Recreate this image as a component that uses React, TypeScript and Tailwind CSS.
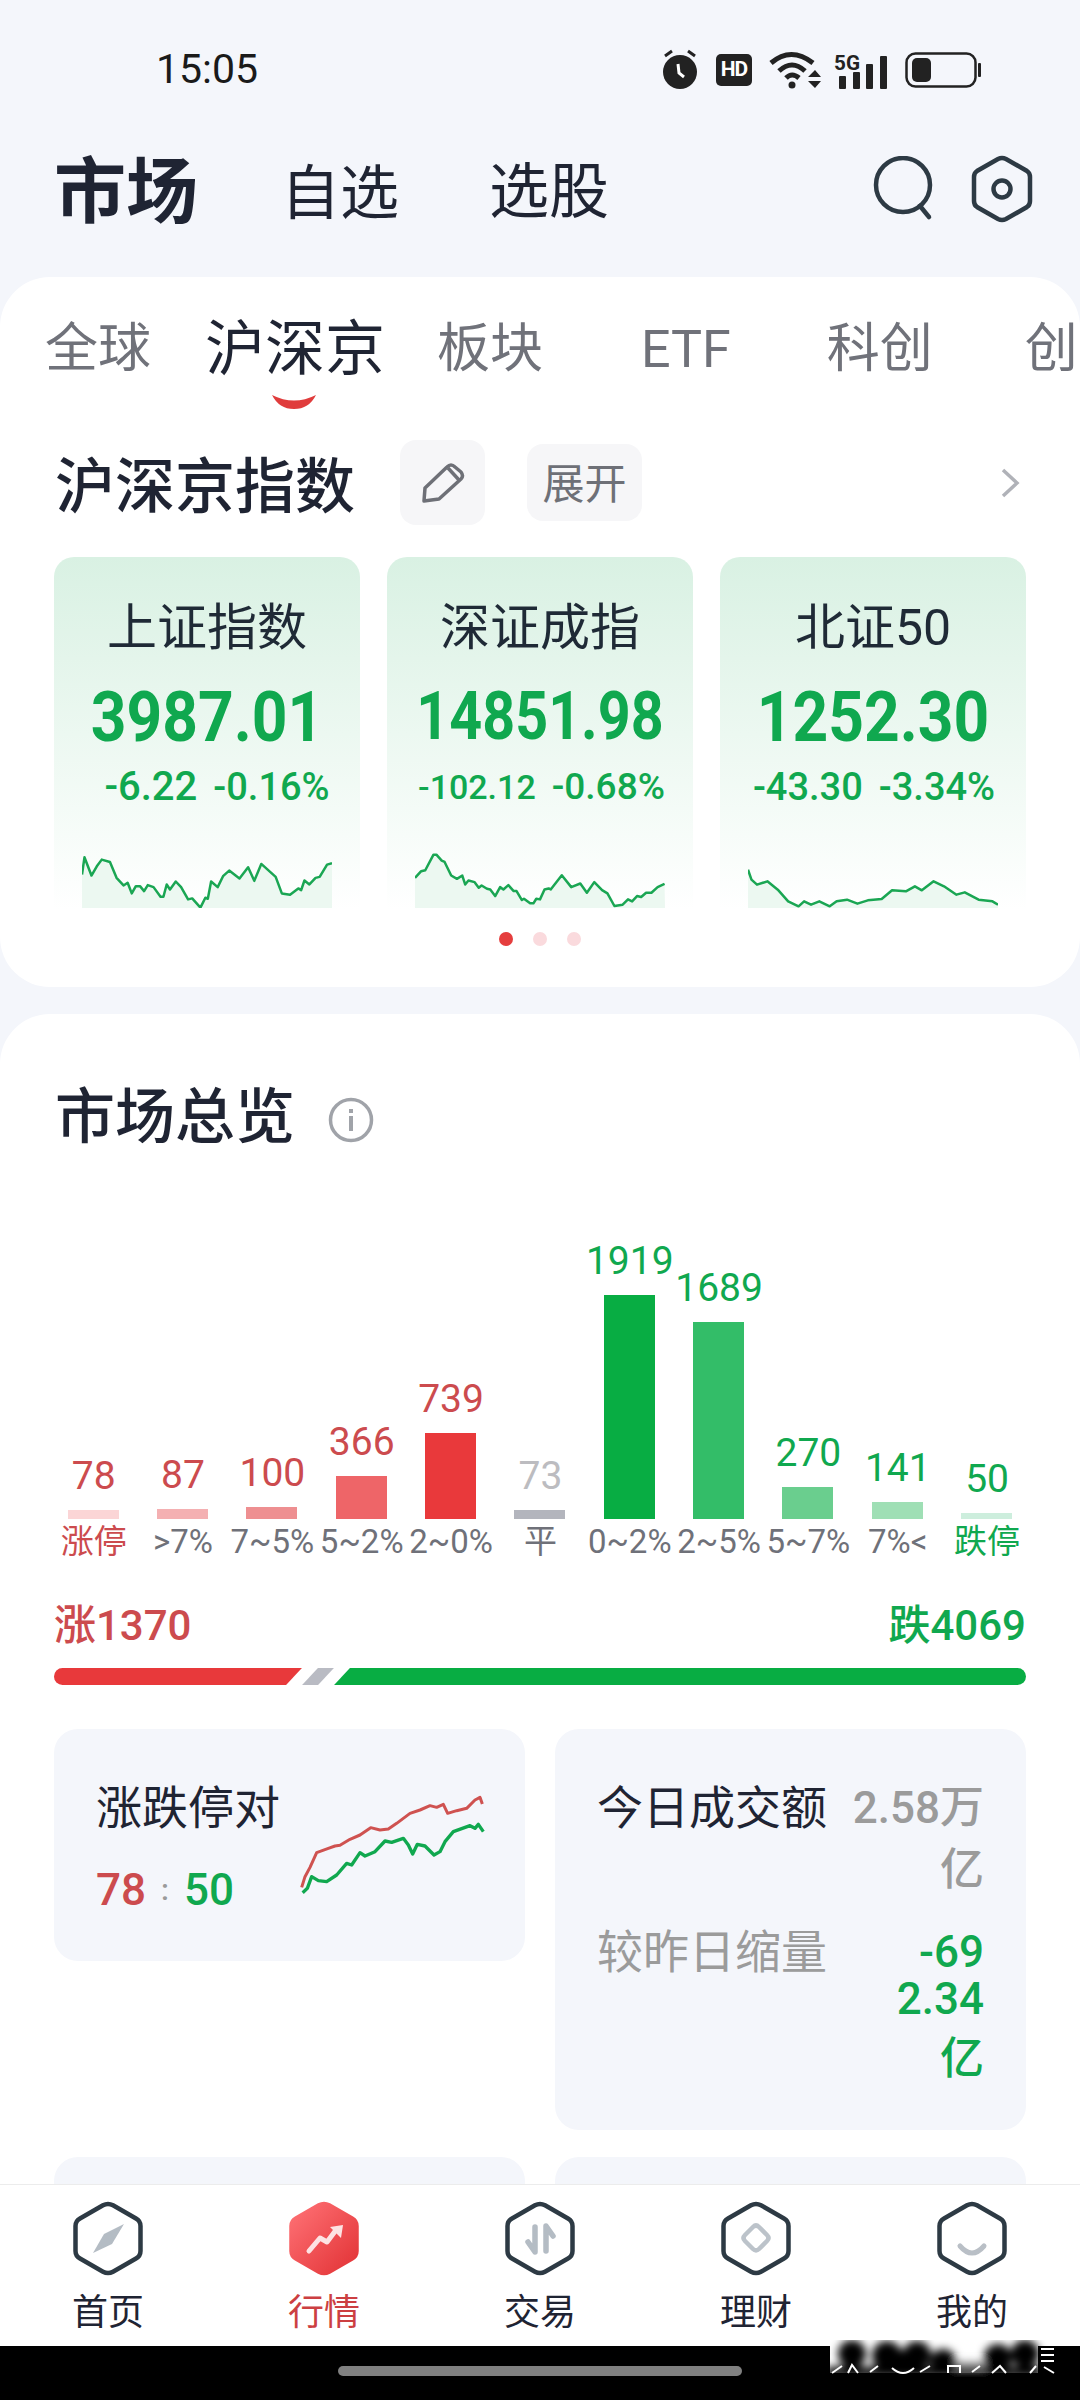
import * as React from 'react';

const INK = '#1f2433';

const hexPath =
  'M30 5.3 Q35 2.5 40 5.3 L63 18.5 Q67.5 21 67.5 26 L67.5 51 Q67.5 56 63 58.5 L40 71.7 Q35 74.5 30 71.7 L7 58.5 Q2.5 56 2.5 51 L2.5 26 Q2.5 21 7 18.5 Z';

const line1 =
  '104,165 110,113 127,168 140,140 152,120 172,127 188,175 205,198 215,190 225,222 235,200 245,200 255,215 264,197 278,203 295,232 302,232 310,195 318,210 332,186 345,203 362,240 372,237 392,265 404,235 410,238 418,186 434,203 447,170 462,153 487,177 508,143 523,184 540,133 575,172 590,222 610,226 630,207 637,212 645,183 657,195 672,175 682,172 700,135 712,131';
const line2 =
  '920,175 935,155 945,152 965,105 972,105 985,123 992,127 1008,168 1022,178 1035,168 1042,195 1050,183 1065,188 1075,205 1082,198 1095,208 1103,210 1115,230 1127,203 1135,210 1147,197 1160,215 1167,215 1180,242 1185,238 1200,252 1208,252 1215,238 1224,240 1235,210 1245,207 1250,210 1277,167 1300,203 1322,192 1338,220 1356,188 1375,212 1388,222 1405,260 1425,256 1438,240 1448,246 1460,230 1470,233 1482,220 1495,220 1510,203 1527,193';
const line3 =
  '1087,990 1092,1020 1100,1035 1115,1025 1130,1050 1145,1085 1160,1100 1168,1085 1178,1095 1190,1085 1205,1100 1215,1085 1230,1080 1245,1092 1260,1082 1280,1078 1295,1052 1315,1055 1328,1040 1338,1052 1355,1025 1370,1040 1388,1065 1400,1058 1420,1080 1440,1085 1448,1095';

const indexCards = [
  {
    name: '上证指数',
    value: '3987.01',
    valueClass: 'text-[70px] scale-x-[0.89]',
    change: '-6.22',
    pct: '-0.16%',
    changeClass: 'pl-[20px] gap-[16px] text-[40px]',
    pctClass: 'text-[38px]',
    line: line1,
    box: { x: 104, y: 100, w: 608, h: 166 },
  },
  {
    name: '深证成指',
    value: '14851.98',
    valueClass: 'text-[66px] scale-x-[0.87]',
    change: '-102.12',
    pct: '-0.68%',
    changeClass: 'pl-[3px] gap-[16px] text-[34px]',
    pctClass: 'text-[37px]',
    line: line2,
    box: { x: 920, y: 100, w: 608, h: 166 },
  },
  {
    name: '北证50',
    value: '1252.30',
    valueClass: 'text-[70px] scale-x-[0.89]',
    change: '-43.30',
    pct: '-3.34%',
    changeClass: 'pl-[2px] gap-[16px] text-[38px]',
    pctClass: 'text-[38px]',
    line: line3,
    box: { x: 1087, y: 940, w: 361, h: 165 },
  },
];

const bars = [
  { num: '78', label: '涨停', bar: 'h-[9px] bg-[#fbd5d6]', numColor: 'text-[#cc4b4e]', labelColor: 'text-[#cc4b4e]' },
  { num: '87', label: '>7%', bar: 'h-[10px] bg-[#f4b0b2]', numColor: 'text-[#cc4b4e]', labelColor: 'text-[#6f7179]' },
  { num: '100', label: '7~5%', bar: 'h-[12px] bg-[#ee8f91]', numColor: 'text-[#cc4b4e]', labelColor: 'text-[#6f7179]' },
  { num: '366', label: '5~2%', bar: 'h-[43px] bg-[#ee6568]', numColor: 'text-[#cc4b4e]', labelColor: 'text-[#6f7179]' },
  { num: '739', label: '2~0%', bar: 'h-[86px] bg-[#e9393b]', numColor: 'text-[#cc4b4e]', labelColor: 'text-[#6f7179]' },
  { num: '73', label: '平', bar: 'h-[9px] bg-[#b3b5bd]', numColor: 'text-[#bcbcc0]', labelColor: 'text-[#6f7179]' },
  { num: '1919', label: '0~2%', bar: 'h-[224px] bg-[#08ad43]', numColor: 'text-[#10a84f]', labelColor: 'text-[#6f7179]' },
  { num: '1689', label: '2~5%', bar: 'h-[197px] bg-[#33bd68]', numColor: 'text-[#10a84f]', labelColor: 'text-[#6f7179]' },
  { num: '270', label: '5~7%', bar: 'h-[32px] bg-[#6ace8e]', numColor: 'text-[#10a84f]', labelColor: 'text-[#6f7179]' },
  { num: '141', label: '7%<', bar: 'h-[17px] bg-[#9fdfb5]', numColor: 'text-[#10a84f]', labelColor: 'text-[#6f7179]' },
  { num: '50', label: '跌停', bar: 'h-[6px] bg-[#cdeedd]', numColor: 'text-[#10a84f]', labelColor: 'text-[#10a84f]' },
];

const NavHex: React.FC<{ active?: boolean; children?: React.ReactNode }> = ({ active, children }) => (
  <svg width="70" height="77" viewBox="0 0 70 77" fill="none">
    <defs>
      <linearGradient id="navRed" x1="0" y1="0" x2="1" y2="1">
        <stop offset="0" stopColor="#ff7276" />
        <stop offset="1" stopColor="#e23235" />
      </linearGradient>
    </defs>
    <path
      d={hexPath}
      fill={active ? 'url(#navRed)' : 'none'}
      stroke={active ? 'url(#navRed)' : '#2d3a44'}
      strokeWidth="4.5"
    />
    {children}
  </svg>
);

const StatusIcons: React.FC = () => (
  <div className="ml-auto mr-[99px] mt-[3px] flex items-center">
    <svg width="36" height="42" viewBox="0 0 36 42" fill="none">
      <circle cx="18" cy="23" r="17" fill="#222" />
      <path d="M3 7 L10 2 M33 7 L26 2" stroke="#222" strokeWidth="3" />
      <path d="M16 15 L17 24 L22 28" stroke="#fff" strokeWidth="3" />
    </svg>
    <div className="ml-[18px] flex h-[32px] w-[36px] items-center justify-center rounded-[5px] bg-[#222] text-[21px] font-bold leading-none tracking-[-1px] text-white">
      HD
    </div>
    <svg className="ml-[17px]" width="52" height="40" viewBox="0 0 52 40" fill="none">
      <path d="M2 13 Q22 -4 44 13" stroke="#222" strokeWidth="5" />
      <path d="M10 21 Q23 9 36 21" stroke="#222" strokeWidth="5" />
      <path d="M17 28 Q23 22 30 28" stroke="#222" strokeWidth="5" />
      <circle cx="23" cy="35" r="3.5" fill="#222" />
      <path d="M39 27 L46 20 L52 27 Z M39 31 L52 31 L46 38 Z" fill="#222" />
    </svg>
    <svg className="ml-[13px]" width="54" height="40" viewBox="0 -4 54 40" fill="none">
      <text x="0" y="16" fontSize="21" fontWeight="700" fill="#222" fontFamily="Roboto" textLength="26" lengthAdjust="spacingAndGlyphs">
        5G
      </text>
      <rect x="5" y="22" width="7" height="13" rx="1" fill="#222" />
      <rect x="19" y="18" width="7" height="17" rx="1" fill="#222" />
      <rect x="32" y="10" width="7" height="25" rx="1" fill="#222" />
      <rect x="46" y="2" width="7" height="33" rx="1" fill="#222" />
    </svg>
    <svg className="ml-[17px]" width="76" height="36" viewBox="0 0 76 36" fill="none">
      <rect x="1.5" y="1.5" width="69" height="33" rx="9" stroke="#222" strokeWidth="2.5" />
      <rect x="7" y="6" width="19" height="24" rx="5" fill="#222" />
      <rect x="73" y="11" width="3" height="14" rx="1" fill="#222" />
    </svg>
  </div>
);

const App: React.FC = () => {
  return (
    <div className="flex h-[2400px] w-[1080px] flex-col overflow-hidden bg-[#f4f6fb] font-['Roboto','Noto_Sans_CJK_SC',sans-serif]">
      <div className="flex h-[136px] shrink-0 items-center pl-[156px]">
        <span className="mt-[2px] text-[41px] leading-none text-[#1a1a1a]">15:05</span>
        <StatusIcons />
      </div>

      <div className="flex h-[108px] shrink-0 items-center pl-[54px]">
        <span className="mt-[6px] text-[72px] font-bold leading-none text-[#1f2433]">市场</span>
        <span className="ml-[83px] mt-[6px] text-[59px] leading-none text-[#1f2433]">自选</span>
        <span className="ml-[90px] mt-[6px] text-[60px] leading-none text-[#1f2433]">选股</span>
        <svg className="-mt-[2px] ml-auto" width="62" height="66" viewBox="0 0 62 66" fill="none">
          <circle cx="31" cy="29" r="27" stroke="#2d3a44" strokeWidth="4.5" />
          <path d="M48 50 L57 61" stroke="#2d3a44" strokeWidth="4.5" strokeLinecap="round" />
        </svg>
        <svg className="-mt-[2px] ml-[37px] mr-[47px]" width="62" height="68" viewBox="0 0 62 68" fill="none">
          <path
            d="M27 4 Q31 2 35 4 L56 16 Q59 18 59 22 L59 46 Q59 50 56 52 L35 64 Q31 66 27 64 L6 52 Q3 50 3 46 L3 22 Q3 18 6 16 Z"
            stroke="#2d3a44"
            strokeWidth="4.5"
          />
          <circle cx="31" cy="34" r="8.5" stroke="#2d3a44" strokeWidth="4.5" />
        </svg>
      </div>

      <div className="mt-[33px] flex min-h-0 flex-1 flex-col overflow-hidden">
        <div className="h-[710px] shrink-0 rounded-[50px] bg-white">
          <div className="flex h-[163px] items-center overflow-hidden whitespace-nowrap pb-[18px] pl-[45px] text-[#70727a]">
            <span className="text-[53px] leading-none">全球</span>
            <span className="relative ml-[54px] text-[60px] leading-none text-[#1f2433]">
              沪深京
              <svg className="absolute left-[66px] top-[74px]" width="46" height="16" viewBox="0 0 46 16" fill="none">
                <path d="M1 1 Q23 12 45 1 Q38 15 23 15 Q8 15 1 1 Z" fill="#e03c3c" />
              </svg>
            </span>
            <span className="ml-[52px] text-[53px] leading-none">板块</span>
            <span className="ml-[98px] text-[52px] leading-none">ETF</span>
            <span className="ml-[96px] text-[53px] leading-none">科创</span>
            <span className="ml-[92px] text-[53px] leading-none">创</span>
          </div>

          <div className="flex h-[85px] items-center pl-[55px]">
            <span className="mt-[10px] text-[60px] font-medium leading-none" style={{ color: INK }}>
              沪深京指数
            </span>
            <div className="ml-[45px] flex h-[85px] w-[85px] items-center justify-center rounded-[16px] bg-[#f6f6f8]">
              <svg width="44" height="42" viewBox="0 0 44 42" fill="none" stroke="#6e7077" strokeWidth="3.5">
                <path d="M3 39 L4 26 L26 5 Q30 1 34 5 L40 10 Q43 14 40 17 L18 37 Z" strokeLinejoin="round" />
                <path d="M27 6 L38 18" />
              </svg>
            </div>
            <div className="ml-[42px] flex h-[77px] w-[115px] items-center justify-center rounded-[16px] bg-[#f6f6f8] pt-[5px] text-[42px] leading-none text-[#6e7077]">
              展开
            </div>
            <svg className="ml-auto mr-[60px]" width="20" height="30" viewBox="0 0 20 30" fill="none">
              <path d="M3 2 L17 15 L3 28" stroke="#b0b2b8" strokeWidth="3.5" />
            </svg>
          </div>

          <div className="mt-[32px] flex gap-[27px] pl-[54px]">
            {indexCards.map((c) => (
              <div
                key={c.name}
                className="h-[353px] w-[306px] rounded-t-[20px] bg-linear-to-b from-[#d9f1e3] to-white pt-[39px] text-center"
              >
                <div className="text-[50px] leading-[64px] text-[#1f2a36]">{c.name}</div>
                <div className={`mt-[17px] font-bold leading-[80px] text-[#10a84f] ${c.valueClass}`}>{c.value}</div>
                <div className={`mt-[6px] flex items-center justify-center whitespace-nowrap font-medium leading-[48px] text-[#10a84f] ${c.changeClass}`}>
                  <span>{c.change}</span>
                  <span className={c.pctClass}>{c.pct}</span>
                </div>
                <svg
                  className="ml-[28px] mt-[42px]"
                  width="250"
                  height="55"
                  viewBox={`${c.box.x} ${c.box.y} ${c.box.w} ${c.box.h}`}
                  preserveAspectRatio="none"
                >
                  <polygon
                    points={`${c.box.x},${c.box.y + c.box.h} ${c.line} ${c.box.x + c.box.w},${c.box.y + c.box.h}`}
                    fill="#ecf8f1"
                  />
                  <polyline
                    points={c.line}
                    fill="none"
                    stroke="#1aa653"
                    strokeWidth="2.5"
                    strokeLinejoin="round"
                    vectorEffect="non-scaling-stroke"
                  />
                </svg>
              </div>
            ))}
          </div>

          <div className="mt-[22px] flex justify-center gap-[20px]">
            <div className="h-[14px] w-[14px] rounded-full bg-[#e53e3e]" />
            <div className="h-[14px] w-[14px] rounded-full bg-[#fadadd]" />
            <div className="h-[14px] w-[14px] rounded-full bg-[#fadadd]" />
          </div>
        </div>

        <div className="mt-[27px] flex-1 rounded-t-[50px] bg-white pt-[72px]">
          <div className="flex h-[64px] items-center pl-[55px]">
            <span className="text-[60px] font-medium leading-none" style={{ color: INK }}>
              市场总览
            </span>
            <svg className="ml-[33px] mt-[4px]" width="46" height="46" viewBox="0 0 46 46" fill="none">
              <circle cx="23" cy="23" r="20.5" stroke="#a0a3a9" strokeWidth="3.5" />
              <rect x="21" y="19" width="4" height="15" fill="#a0a3a9" />
              <rect x="21" y="12" width="4" height="4" fill="#a0a3a9" />
            </svg>
          </div>

          <div className="ml-[49px] mt-[49px] flex h-[320px] w-[983px] items-end">
            {bars.map((b) => (
              <div key={b.num + b.label} className="flex w-[89.35px] flex-col items-center justify-end">
                <div className={`mb-[13px] whitespace-nowrap text-[39px] leading-[42px] ${b.numColor}`}>{b.num}</div>
                <div className={`-ml-[1px] w-[51px] ${b.bar}`} />
              </div>
            ))}
          </div>
          <div className="ml-[49px] mt-[5px] flex h-[36px] w-[983px]">
            {bars.map((b) => (
              <div
                key={b.label}
                className={`flex w-[89.35px] justify-center whitespace-nowrap text-[33px] leading-[36px] ${b.labelColor}`}
              >
                {b.label}
              </div>
            ))}
          </div>

          <div className="mt-[41px] flex h-[50px] items-center justify-between px-[54px] text-[42px] font-medium leading-none">
            <span className="text-[#cc4b4e]">涨1370</span>
            <span className="text-[#10a84f]">跌4069</span>
          </div>
          <div className="mx-[54px] mt-[17px] flex h-[17px] gap-[16px] overflow-hidden rounded-full">
            <div className="-ml-[20px] w-[260px] shrink-0 -skew-x-[43deg] bg-[#e8393b]" />
            <div className="w-[16px] shrink-0 -skew-x-[43deg] bg-[#b9bbc3]" />
            <div className="w-[720px] shrink-0 -skew-x-[43deg] bg-[#08ad43]" />
          </div>

          <div className="mt-[44px] flex items-start gap-[30px] px-[54px]">
            <div className="flex h-[232px] w-[471px] rounded-[24px] bg-[#f4f6fb] pl-[42px] pt-[48px]">
              <div className="w-[184px] shrink-0">
                <div className="text-[46px] leading-[62px] text-[#1f2433]">涨跌停对</div>
                <div className="mt-[20px] flex items-center text-[44px] font-medium leading-[62px]">
                  <span className="text-[#cc4b4e]">78</span>
                  <span className="ml-[15px] text-[30px] text-[#9a9a9a]">:</span>
                  <span className="ml-[15px] text-[#10a84f]">50</span>
                </div>
              </div>
              <svg className="mt-[3px]" width="220" height="130" viewBox="0 0 660 390" fill="none">
                <polyline
                  points="65,322 75,290 90,262 110,218 145,205 165,198 180,196 210,178 240,165 272,143 300,150 325,147 350,130 390,100 420,90 450,77 470,82 490,73 503,100 530,92 560,85 585,60 600,52 607,72"
                  stroke="#cf5250"
                  strokeWidth="9"
                  strokeLinejoin="round"
                />
                <polyline
                  points="68,338 82,325 95,290 115,302 140,305 170,285 200,250 215,255 240,218 255,228 285,215 315,183 335,187 370,175 385,195 398,222 412,193 435,198 462,225 480,215 495,185 520,155 570,137 585,145 595,133 610,155"
                  stroke="#10a84f"
                  strokeWidth="10"
                  strokeLinejoin="round"
                />
              </svg>
            </div>

            <div className="h-[401px] w-[471px] rounded-[24px] bg-[#f4f6fb] px-[42px] pt-[48px]">
              <div className="flex items-start justify-between">
                <div className="text-[46px] leading-[62px] text-[#1f2433]">今日成交额</div>
                <div className="text-right text-[44px] font-medium leading-[62px] text-[#9b9b9b]">
                  <div>2.58万</div>
                  <div>亿</div>
                </div>
              </div>
              <div className="mt-[20px] flex items-start justify-between">
                <div className="text-[46px] leading-[62px] text-[#9b9b9b]">较昨日缩量</div>
                <div className="pt-[8px] text-right text-[44px] font-medium leading-[47px] text-[#10a84f]">
                  <div>-69</div>
                  <div>2.34</div>
                  <div className="leading-[72px]">亿</div>
                </div>
              </div>
            </div>
          </div>

          <div className="mt-[27px] flex gap-[30px] px-[54px]">
            <div className="h-[200px] w-[471px] rounded-[24px] bg-[#f4f6fb]" />
            <div className="h-[200px] w-[471px] rounded-[24px] bg-[#f4f6fb]" />
          </div>
        </div>
      </div>

      <div className="flex h-[162px] shrink-0 border-t border-[#ececec] bg-white pt-[15px] text-[36px] leading-[44px] text-[#1f2433]">
        <div className="flex w-[216px] flex-col items-center">
          <NavHex>
            <polygon points="51,24 39,44 20,53 31,34" fill="#b4bcc4" />
          </NavHex>
          <span className="mt-[14px]">首页</span>
        </div>
        <div className="flex w-[216px] flex-col items-center">
          <NavHex active>
            <path d="M20 51 L31 38 L38 42 L47 30" stroke="#fde3e3" strokeWidth="5" strokeLinecap="round" strokeLinejoin="round" />
            <polygon points="54,25 41,27 52,38" fill="#fde3e3" />
          </NavHex>
          <span className="mt-[14px] text-[#cc3f42]">行情</span>
        </div>
        <div className="flex w-[216px] flex-col items-center">
          <NavHex>
            <path d="M30 27 L30 52 L23 42 M41 51 L41 26 L48 36" stroke="#b4bcc4" strokeWidth="5.5" strokeLinecap="round" strokeLinejoin="round" />
          </NavHex>
          <span className="mt-[14px]">交易</span>
        </div>
        <div className="flex w-[216px] flex-col items-center">
          <NavHex>
            <path d="M32 27 Q35 24 38 27 L46 35 Q49 38 46 41 L38 49 Q35 52 32 49 L24 41 Q21 38 24 35 Z" stroke="#bcc3ca" strokeWidth="4.5" />
          </NavHex>
          <span className="mt-[14px]">理财</span>
        </div>
        <div className="flex w-[216px] flex-col items-center">
          <NavHex>
            <path d="M23 46 Q35 60 47 46" stroke="#b9bfc6" strokeWidth="5" strokeLinecap="round" />
          </NavHex>
          <span className="mt-[14px]">我的</span>
        </div>
      </div>

      <div className="relative flex h-[54px] shrink-0 items-start justify-center bg-black pt-[20px]">
        <div className="h-[10px] w-[404px] rounded-full bg-[#808080]" />
        <svg className="absolute left-[820px] top-[-6px]" width="240" height="46" viewBox="820 2340 240 46" fill="none">
          <defs>
            <filter id="wmBlur" x="-10%" y="-30%" width="120%" height="160%">
              <feGaussianBlur stdDeviation="4" />
            </filter>
          </defs>
          <rect x="830" y="2346" width="208" height="27" fill="#fff" />
          <g filter="url(#wmBlur)" fill="#000">
            <circle cx="852" cy="2354" r="14" />
            <circle cx="887" cy="2356" r="15" />
            <circle cx="917" cy="2355" r="14" />
            <circle cx="903" cy="2364" r="14" />
            <circle cx="943" cy="2362" r="13" />
            <circle cx="998" cy="2358" r="14" />
            <circle cx="1025" cy="2354" r="14" />
            <rect x="826" y="2367" width="216" height="10" />
            <rect x="955" y="2362" width="30" height="6" fill="#888" />
          </g>
          <path d="M832 2373 L842 2366 M848 2373 L852 2365 L858 2373 M870 2372 L878 2366 M892 2368 Q903 2378 914 2368 M920 2372 L930 2366 M948 2373 L948 2366 L960 2366 L960 2373 M972 2372 L980 2366 M992 2373 L1000 2366 L1006 2373 M1030 2373 L1036 2366" stroke="#fff" strokeWidth="2" />
          <path d="M1041 2349 L1054 2349 M1041 2355 L1054 2355 M1041 2361 L1054 2361 M1044 2367 L1054 2373" stroke="#fff" strokeWidth="2" />
        </svg>
      </div>
    </div>
  );
};

export default App;
